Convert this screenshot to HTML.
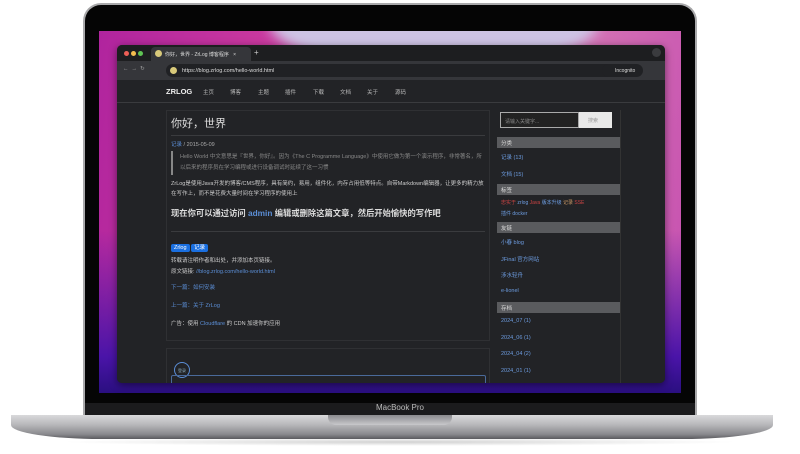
<!DOCTYPE html>
<html><head><meta charset="utf-8"><style>
*{margin:0;padding:0;box-sizing:border-box}
body{width:800px;height:454px;background:#fff;position:relative;overflow:hidden;font-family:"Liberation Sans","Noto Sans CJK SC",sans-serif}
.lid{position:absolute;left:83px;top:3px;width:614px;height:413px;background:#050505;border-radius:18px 18px 0 0;border:2px solid #a9a9ab;border-bottom:none}
.chin{position:absolute;left:85px;top:403px;width:610px;height:13px;background:#1b1b1d}
.mbp{position:absolute;left:0;width:800px;top:403px;text-align:center;font-size:8px;color:#bbb}
.wall{position:absolute;left:99px;top:31px;width:582px;height:362px;overflow:hidden;
background:linear-gradient(180deg,rgba(0,0,0,0) 55%,#4a14a8 90%,#2a0f80 100%),linear-gradient(100deg,#b0249e 0%,#c9389f 25%,#d86aa8 50%,#d77bb5 70%,#c64fb0 100%)}
.wall:before{content:"";position:absolute;left:170px;top:-60px;width:330px;height:100px;background:#cdc3e4;border-radius:50%;filter:blur(6px)}
.base{position:absolute;left:11px;top:415px;width:762px;height:24px;background:linear-gradient(#d9d9db,#b8b8bb 40%,#8a8a8e 80%,#5a5a5e);border-radius:0 0 90px 90px/0 0 14px 14px}
.notch{position:absolute;left:328px;top:415px;width:124px;height:10px;background:linear-gradient(#8b8b8f,#c8c8cb);border-radius:0 0 8px 8px}
.shadow{position:absolute;left:60px;top:438px;width:680px;height:8px;background:radial-gradient(ellipse at center,rgba(0,0,0,.18),rgba(0,0,0,0) 70%)}
.br{position:absolute;left:117px;top:45px;width:548px;height:338px;background:#202124;border-radius:5px;overflow:hidden;box-shadow:0 2px 8px rgba(0,0,0,.5)}
.tabs{height:16px;background:#1d1e20;position:relative}
.dot{position:absolute;top:6px;width:5px;height:5px;border-radius:50%}
.tab{position:absolute;left:34px;top:2px;width:100px;height:14px;background:#35363a;border-radius:4px 4px 0 0;font-size:5px;color:#ddd;padding:4px 0 0 14px}
.tab i{position:absolute;left:4px;top:3px;width:7px;height:7px;border-radius:50%;background:#d8c97a}
.addr{height:19px;background:#35363a;position:relative;font-size:5.5px;color:#aaa}
.url{position:absolute;left:49px;top:3px;width:450px;height:13px;background:#202124;border-radius:7px;padding:4px 0 0 16px;color:#ddd}
.url i{position:absolute;left:4px;top:3px;width:7px;height:7px;border-radius:50%;background:#d8c97a}
.inc{position:absolute;left:485px;top:3px;width:41px;height:13px;background:#202124;border-radius:7px;font-size:5px;padding:4px 0 0 13px;color:#ddd}
.page{position:absolute;top:35px;left:0;width:548px;height:303px;background:#222326}
.nav{height:23px;border-bottom:1px solid #3a3b3e;font-size:5.5px;color:#bbb;position:relative}
.nav b{position:absolute;left:49px;top:7px;font-size:7.5px;color:#eee}
.nav span{position:absolute;top:8px}
.card{position:absolute;left:49px;width:324px;border:1px solid #2f3033;background:#222326;color:#ccc;font-size:5.5px}
a{color:#5b8ed6;text-decoration:none}
.side{position:absolute;left:380px;top:30px;width:123px;height:273px;font-size:5.5px;color:#6d9ce0}
.sh{background:#5a5b5e;color:#ddd;height:11px;padding:2px 0 0 4px;margin:4px 0 3px}
.side p{padding:2px 0 0 4px;height:16.5px}
.vl{position:absolute;left:503px;top:30px;width:1px;height:273px;background:#333}
</style></head><body>
<div class="shadow"></div>
<div class="lid"></div>
<div class="chin"></div>
<div class="mbp">MacBook Pro</div>
<div class="wall"></div>
<div class="base"></div>
<div class="notch"></div>
<div class="br">
 <div class="tabs">
  <div class="dot" style="left:7px;background:#ed5f56"></div><div class="dot" style="left:14px;background:#f4bd4f"></div><div class="dot" style="left:21px;background:#5fc454"></div>
  <div class="tab"><i></i>你好，世界 - ZrLog 博客程序 &nbsp; ×</div>
  <div style="position:absolute;left:137px;top:3px;color:#ccc;font-size:8px">+</div>
  <div style="position:absolute;left:535px;top:3px;width:9px;height:9px;border-radius:50%;background:#3a3b3e"></div>
 </div>
 <div class="addr">
  <span style="position:absolute;left:6px;top:5px">←&nbsp; →&nbsp; ↻</span>
  <div class="url"><i></i>https://blog.zrlog.com/hello-world.html</div>
  <div class="inc">Incognito</div>
 </div>
 <div class="page">
  <div class="nav"><b>ZRLOG</b>
   <span style="left:86px">主页</span><span style="left:113px">博客</span><span style="left:141px">主题</span><span style="left:168px">插件</span><span style="left:196px">下载</span><span style="left:223px">文档</span><span style="left:250px">关于</span><span style="left:278px">源码</span>
  </div>
  <div class="card" style="top:30px;height:231px;padding:3px 4px">
   <div style="font-size:11px;color:#ddd;padding:1px 0 4px;border-bottom:1px solid #3a3b3e">你好，世界</div>
   <div style="margin:4px 0 3px;color:#aaa"><a>记录</a> / 2015-05-09</div>
   <div style="border-left:2px solid #888;padding:1px 0 1px 7px;color:#888;line-height:11px">Hello World 中文意思是『世界，你好』。因为《The C Programme Language》中使用它做为第一个演示程序，非常著名，所以后来的程序员在学习编程或进行设备调试时延续了这一习惯</div>
   <div style="margin-top:4px;line-height:10px">ZrLog是使用Java开发的博客/CMS程序，具有简约，易用，组件化，内存占用低等特点。自带Markdown编辑器，让更多的精力放在写作上，而不是花费大量时间在学习程序的使用上</div>
   <div style="font-size:8.3px;font-weight:bold;color:#ddd;margin:8px 0 12px">现在你可以通过访问 <a>admin</a> 编辑或删除这篇文章，然后开始愉快的写作吧</div>
   <div style="border-top:1px solid #3a3b3e;padding-top:11px">
    <span style="background:#1a6fe0;color:#fff;padding:1px 3px;border-radius:2px">Zrlog</span> <span style="background:#1a6fe0;color:#fff;padding:1px 3px;border-radius:2px">记录</span>
   </div>
   <div style="margin-top:5px;line-height:11px">转载请注明作者和出处，并添加本页链接。<br>原文链接: <a>//blog.zrlog.com/hello-world.html</a></div>
   <div style="margin-top:5px"><a>下一篇：如何安装</a></div>
   <div style="margin-top:10px"><a>上一篇：关于 ZrLog</a></div>
   <div style="margin-top:10px">广告：使用 <a>Cloudflare</a> 的 CDN 加速你的应用</div>
  </div>
  <div class="card" style="top:268px;height:42px">
   <div style="position:absolute;left:7px;top:13px;width:16px;height:16px;border:1px solid #5b8ed6;border-radius:50%;font-size:4px;color:#8ab;padding-top:5px;text-align:center">登录</div>
   <div style="position:absolute;left:4px;top:26px;width:315px;height:12px;border:1px solid #4a6a9a;border-radius:2px"></div>
  </div>
  <div class="side">
   <div style="height:18px;position:relative;margin:2px 0 0 3px">
    <div style="position:absolute;left:0;top:0;width:79px;height:16px;border:1px solid #aaa;background:#222;color:#888;font-size:5px;padding:5px 4px">请输入关键字...</div>
    <div style="position:absolute;left:79px;top:0;width:33px;height:16px;background:#e8e8e8;color:#999;font-size:5px;padding:5px 9px">搜索</div>
   </div>
   <div class="sh" style="margin-top:7px">分类</div><p>记录 (13)</p><p>文档 (15)</p>
   <div class="sh" style="margin-top:0">标签</div>
   <div style="padding:0 4px;line-height:11px;font-size:5px"><span style="color:#c44">忠实于</span> zrlog <span style="color:#c44">Java</span> 版本升级 <span style="color:#c96">记录</span> <span style="color:#c44">SSE</span><br>插件 docker</div>
   <div class="sh" style="margin-top:2px">友链</div><p>小春 blog</p><p>JFinal 官方网站</p><p>涉水轻舟</p><p>e-lionel</p>
   <div class="sh" style="margin-top:0">存档</div><p>2024_07 (1)</p><p>2024_06 (1)</p><p>2024_04 (2)</p><p>2024_01 (1)</p>
  </div>
  <div class="vl"></div>
 </div>
</div>
</body></html>
